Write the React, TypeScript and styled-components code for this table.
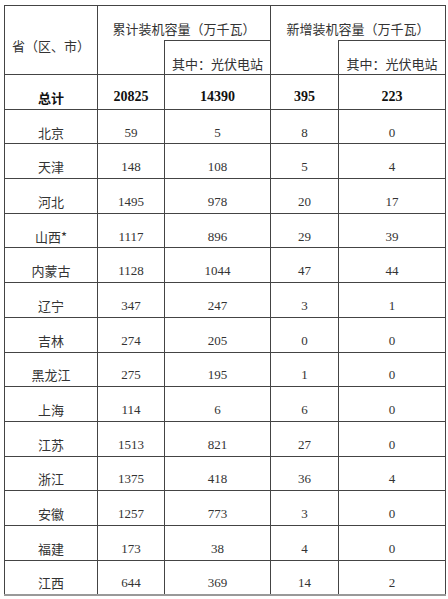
import React from 'react';
import styled, { createGlobalStyle } from 'styled-components';

const GlobalStyle = createGlobalStyle`
  html, body {
    margin: 0;
    padding: 0;
    background: #ffffff;
  }
`;

const Page = styled.div`
  padding: 5px 0 0 4px;
  width: 448px;
  height: 599px;
  overflow: hidden;
  box-sizing: border-box;
`;

const Table = styled.table`
  border-collapse: collapse;
  table-layout: fixed;
  width: 441px;
  color: #333;
`;

const Cell = styled.td<{ $num?: boolean; $bold?: boolean; $noTop?: boolean; $noBottom?: boolean }>`
  border: 1px solid #444;
  ${(p) => (p.$noTop ? 'border-top: none;' : '')}
  ${(p) => (p.$noBottom ? 'border-bottom: none;' : '')}
  padding: 11px 0 0 0;
  text-align: center;
  vertical-align: middle;
  line-height: 1;
  white-space: nowrap;
  font-family: ${(p) =>
    p.$num
      ? '"Liberation Serif", "Times New Roman", serif'
      : '"Noto Sans CJK SC", "Noto Sans", sans-serif'};
  font-size: ${(p) => (p.$num ? (p.$bold ? '14px' : '13px') : '13px')};
  font-weight: ${(p) => (p.$bold ? 700 : 400)};
  color: ${(p) => (p.$bold ? '#111' : '#333')};
`;

const HeadRow = styled.tr<{ $h: number }>`
  height: ${(p) => p.$h}px;
`;

const BodyRow = styled.tr<{ $last?: boolean }>`
  height: 34.7px;
  ${(p) => (p.$last ? 'td { border-bottom: 2px solid #999; }' : '')}
`;

interface Row {
  name: string;
  total: string;
  pv: string;
  added: string;
  addedPv: string;
}

const rows: Row[] = [
  { name: '北京', total: '59', pv: '5', added: '8', addedPv: '0' },
  { name: '天津', total: '148', pv: '108', added: '5', addedPv: '4' },
  { name: '河北', total: '1495', pv: '978', added: '20', addedPv: '17' },
  { name: '山西*', total: '1117', pv: '896', added: '29', addedPv: '39' },
  { name: '内蒙古', total: '1128', pv: '1044', added: '47', addedPv: '44' },
  { name: '辽宁', total: '347', pv: '247', added: '3', addedPv: '1' },
  { name: '吉林', total: '274', pv: '205', added: '0', addedPv: '0' },
  { name: '黑龙江', total: '275', pv: '195', added: '1', addedPv: '0' },
  { name: '上海', total: '114', pv: '6', added: '6', addedPv: '0' },
  { name: '江苏', total: '1513', pv: '821', added: '27', addedPv: '0' },
  { name: '浙江', total: '1375', pv: '418', added: '36', addedPv: '4' },
  { name: '安徽', total: '1257', pv: '773', added: '3', addedPv: '0' },
  { name: '福建', total: '173', pv: '38', added: '4', addedPv: '0' },
  { name: '江西', total: '644', pv: '369', added: '14', addedPv: '2' },
];

const App: React.FC = () => {
  return (
    <Page>
      <GlobalStyle />
      <Table>
        <colgroup>
          <col style={{ width: '93px' }} />
          <col style={{ width: '67px' }} />
          <col style={{ width: '106px' }} />
          <col style={{ width: '68px' }} />
          <col style={{ width: '107px' }} />
        </colgroup>
        <tbody>
          <HeadRow $h={35}>
            <Cell rowSpan={2}>省（区、市）</Cell>
            <Cell colSpan={2} $noBottom>
              累计装机容量（万千瓦）
            </Cell>
            <Cell colSpan={2} $noBottom>
              新增装机容量（万千瓦）
            </Cell>
          </HeadRow>
          <HeadRow $h={34}>
            <Cell $noTop />
            <Cell>其中：光伏电站</Cell>
            <Cell $noTop />
            <Cell>其中：光伏电站</Cell>
          </HeadRow>
          <BodyRow>
            <Cell $bold>总计</Cell>
            <Cell $num $bold>20825</Cell>
            <Cell $num $bold>14390</Cell>
            <Cell $num $bold>395</Cell>
            <Cell $num $bold>223</Cell>
          </BodyRow>
          {rows.map((r, i) => (
            <BodyRow key={r.name} $last={i === rows.length - 1}>
              <Cell>{r.name}</Cell>
              <Cell $num>{r.total}</Cell>
              <Cell $num>{r.pv}</Cell>
              <Cell $num>{r.added}</Cell>
              <Cell $num>{r.addedPv}</Cell>
            </BodyRow>
          ))}
        </tbody>
      </Table>
    </Page>
  );
};

export default App;
